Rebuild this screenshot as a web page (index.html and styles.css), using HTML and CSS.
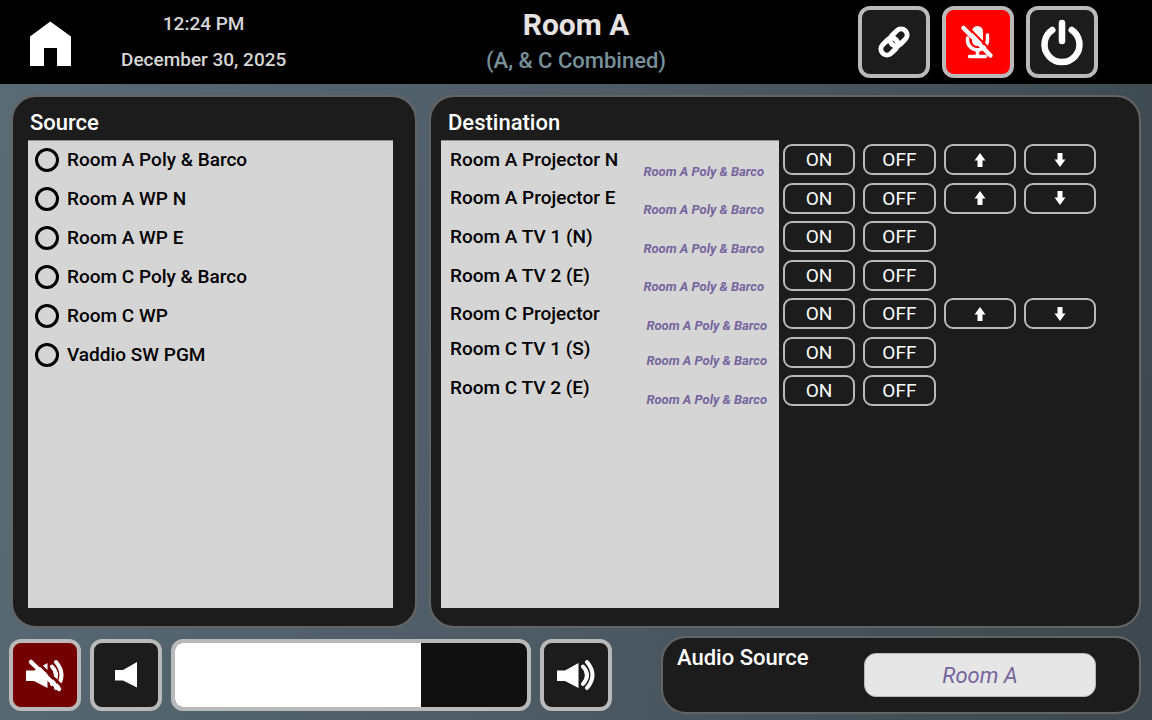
FILE: index.html
```html
<!DOCTYPE html>
<html lang="en">
<head>
    <meta charset="UTF-8">
    <meta name="viewport" content="width=device-width, initial-scale=1.0">
    <title>Room A</title>

    <link rel="stylesheet" href="styles.css">
</head>
<body>

    <!-- shared button icons -->
    <svg class="sprite" aria-hidden="true">
        <symbol id="up" viewBox="0 0 12 16">
            <path d="M6 1L11.500 8.500H8.500V15H3.500V8.500H.5z"/>
        </symbol>
        <symbol id="down" viewBox="0 0 12 16">
            <path d="M6 15L11.500 7.500H8.500V1H3.500V7.500H.5z"/>
        </symbol>
    </svg>

    <header class="topbar">
        <div class="topbar-left">
            <button class="home" aria-label="Home">
                <svg width="48" height="48" viewBox="0 0 48 48"><path d="M24.300 3.500L45 18.500V48H31V30H18V48H4V18.500z" fill="#fff"/></svg>
            </button>
            <div class="clock">
                <div>12:24 PM</div>
                <div>December 30, 2025</div>
            </div>
        </div>
        <div class="title">
            <h1>Room A</h1>
            <p>(A, &amp; C Combined)</p>
        </div>
        <div class="topbar-right">
            <button class="square" aria-label="Combine rooms">
                <svg width="40" height="40" viewBox="0 0 40 40" fill="none" stroke="#fff" stroke-width="5">
                    <g transform="rotate(-45 20 20)">
                        <rect x="4" y="14" width="19" height="12" rx="6"/>
                        <rect x="17" y="14" width="19" height="12" rx="6"/>
                    </g>
                </svg>
            </button>
            <button class="square mic" aria-label="Mute microphone">
                <svg width="36" height="36" viewBox="0 0 36 36" fill="none" stroke="#fff" stroke-linecap="round">
                    <rect x="12" y="2" width="11" height="20" rx="5.500" fill="#fff" stroke="none"/>
                    <path d="M7.500 14v2a10 10 0 0 0 20 0V11" stroke-width="3.500"/>
                    <path d="M17.500 26v6M9.500 32.500h16" stroke-width="3.500"/>
                    <path d="M6.500 1.500L34 29.500" stroke="#f00" stroke-width="2"/>
                    <path d="M3.500 4L30.500 31.500" stroke-width="4.500"/>
                </svg>
            </button>
            <button class="square" aria-label="Power">
                <svg width="48" height="48" viewBox="0 0 48 48" fill="none" stroke="#fff" stroke-width="6.500" stroke-linecap="round">
                    <path d="M14.300 12A17.500 17.500 0 1 0 33.700 12"/>
                    <path d="M24 5v18"/>
                </svg>
            </button>
        </div>
    </header>

    <main class="panels">
        <section class="panel source">
            <h2>Source</h2>
            <div class="list source-list">
                <label><input type="radio" name="source">Room A Poly &amp; Barco</label>
                <label><input type="radio" name="source">Room A WP N</label>
                <label><input type="radio" name="source">Room A WP E</label>
                <label><input type="radio" name="source">Room C Poly &amp; Barco</label>
                <label><input type="radio" name="source">Room C WP</label>
                <label><input type="radio" name="source">Vaddio SW PGM</label>
            </div>
        </section>

        <section class="panel destination">
            <h2>Destination</h2>
            <div class="destination-body">
                <div class="list destination-list">
                    <ul class="main-group">
                        <li>Room A Projector N <em>Room A Poly &amp; Barco</em></li>
                        <li>Room A Projector E <em>Room A Poly &amp; Barco</em></li>
                        <li>Room A TV 1 (N) <em>Room A Poly &amp; Barco</em></li>
                        <li>Room A TV 2 (E) <em>Room A Poly &amp; Barco</em></li>
                        <li class="room-c">Room C Projector <em>Room A Poly &amp; Barco</em></li>
                    </ul>
                    <ul class="tv-group">
                        <li class="room-c">Room C TV 1 (S) <em>Room A Poly &amp; Barco</em></li>
                        <li class="room-c">Room C TV 2 (E) <em>Room A Poly &amp; Barco</em></li>
                    </ul>
                </div>
                <div class="controls">
                    <div class="control-row">
                        <button>ON</button>
                        <button>OFF</button>
                        <button aria-label="Screen up"><svg><use href="#up"/></svg></button>
                        <button aria-label="Screen down"><svg><use href="#down"/></svg></button>
                    </div>
                    <div class="control-row">
                        <button>ON</button>
                        <button>OFF</button>
                        <button aria-label="Screen up"><svg><use href="#up"/></svg></button>
                        <button aria-label="Screen down"><svg><use href="#down"/></svg></button>
                    </div>
                    <div class="control-row">
                        <button>ON</button>
                        <button>OFF</button>
                    </div>
                    <div class="control-row">
                        <button>ON</button>
                        <button>OFF</button>
                    </div>
                    <div class="control-row">
                        <button>ON</button>
                        <button>OFF</button>
                        <button aria-label="Screen up"><svg><use href="#up"/></svg></button>
                        <button aria-label="Screen down"><svg><use href="#down"/></svg></button>
                    </div>
                    <div class="control-row">
                        <button>ON</button>
                        <button>OFF</button>
                    </div>
                    <div class="control-row">
                        <button>ON</button>
                        <button>OFF</button>
                    </div>
                </div>
            </div>
        </section>
    </main>

    <footer class="bottombar">
        <div class="volume">
            <button class="square mute" aria-label="Mute">
                <svg width="44" height="36" viewBox="0 0 44 36" fill="none" stroke-linecap="round">
                    <path d="M3 13.500H11L24.500 6V31L11 24H3z" fill="#fff"/>
                    <path d="M29 9.500Q37 18 29 27M33 5Q44 18 33 31" stroke="#fff" stroke-width="4"/>
                    <path d="M11 2L39 29" stroke="#740000" stroke-width="3"/>
                    <path d="M8 5L36 32" stroke="#fff" stroke-width="4.500"/>
                </svg>
            </button>
            <button class="square" aria-label="Volume down">
                <svg width="44" height="36" viewBox="0 0 44 36"><path d="M11 13H19L33 5V30.500L19 23.500H11z" fill="#fff"/></svg>
            </button>
            <input class="level" type="range" min="0" max="100" value="70" aria-label="Volume">
            <button class="square" aria-label="Volume up">
                <svg width="44" height="36" viewBox="0 0 44 36" fill="none" stroke-linecap="round">
                    <path d="M3 13.500H11L24.500 6V31L11 24H3z" fill="#fff"/>
                    <path d="M29 9.500Q37 18 29 27M33 5Q44 18 33 31" stroke="#fff" stroke-width="4"/>
                </svg>
            </button>
        </div>
        <section class="panel audio">
            <h2>Audio Source</h2>
            <button class="audio-room">Room A</button>
        </section>
    </footer>

</body>
</html>
```
FILE: styles.css
```css
*{
    box-sizing: border-box;
}

body{
    margin: 0;
    min-height: 100vh;
    display: flex;
    flex-direction: column;
    font-family: Roboto, "Liberation Sans", sans-serif;
    font-weight: 500;
    color: white;
    background: linear-gradient(100deg, #596b75, #4d5b65 50%, #3c474e);
}

h1, h2, p, ul{
    margin: 0;
    padding: 0;
}

button{
    font-family: inherit;
    color: white;
    padding: 0;
    cursor: pointer;
}

.sprite{
    display: none;
}

/* top bar */
.topbar{
    height: 84px;
    display: grid;
    grid-template-columns: 1fr auto 1fr;
    align-items: center;
    background: black;
}

.topbar-left{
    display: flex;
    align-items: center;
    gap: 47px;
    padding-left: 26px;
}

.home{
    border: none;
    background: none;
    height: 48px;
}

.clock{
    font-size: 19px;
    line-height: 36px;
    text-align: center;
    color: #d6d6d6;
}

.title{
    padding-top: 2px;
    text-align: center;
}

.title h1{
    font-size: 30px;
    line-height: 36px;
    color: #e6e2e2;
}

.title p{
    font-size: 22px;
    line-height: 36px;
    color: #78909a;
}

.topbar-right{
    display: flex;
    justify-content: flex-end;
    gap: 12px;
    padding-right: 54px;
}

.square{
    width: 72px;
    height: 72px;
    flex: none;
    display: flex;
    justify-content: center;
    align-items: center;
    border: 4px solid #b9b9b9;
    border-radius: 12px;
    background: #1c1c1c;
}

.mic{
    background: #f00;
}

.mute{
    background: #740000;
}

/* panels */
.panels{
    flex: 1;
    display: grid;
    grid-template-columns: 406fr 712fr;
    gap: 12px;
    padding: 11px 11px 8px;
}

.panel{
    border: 2px solid #646464;
    border-radius: 25px;
    background: #1c1c1c;
}

.panel h2{
    font-size: 22px;
    line-height: 26px;
    font-weight: 500;
}

.source, .destination{
    display: flex;
    flex-direction: column;
    padding: 13px 22px 18px 15px;
}

.source h2{
    padding: 0 2px 4px;
}

.destination{
    padding-left: 10px;
}

.destination h2{
    padding: 0 7px 4px;
}

.list{
    background: #d5d5d5;
    box-shadow: inset 0 1px #8f8f8f;
    color: black;
    font-size: 19px;
}

.source-list{
    flex: 1;
    display: grid;
    grid-template-rows: repeat(12, 1fr);
}

.source-list label{
    display: flex;
    align-items: center;
    gap: 8px;
    padding-left: 7px;
}

.source-list input{
    appearance: none;
    width: 24px;
    height: 24px;
    margin: 0;
    border: 3px solid black;
    border-radius: 50%;
}

.source-list input:checked{
    background: black;
    box-shadow: inset 0 0 0 3px #d5d5d5;
}

.destination-body{
    flex: 1;
    display: flex;
    gap: 4px;
}

.destination-list{
    flex: 1;
}

.destination-list ul{
    display: grid;
    grid-auto-rows: 1fr;
    list-style: none;
}

.main-group{
    height: 193px;
}

.tv-group{
    height: 78px;
    margin-top: -4px;
}

.destination-list li{
    display: flex;
    align-items: center;
    justify-content: space-between;
    padding: 0 15px 0 9px;
}

.destination-list .room-c{
    padding-right: 12px;
}

.destination-list em{
    align-self: flex-end;
    font-size: 13px;
    line-height: 15px;
    font-weight: 700;
    color: #77649f;
}

.controls{
    width: 334px;
    height: 262px;
    margin-top: 4px;
    padding-right: 21px;
    display: flex;
    flex-direction: column;
    justify-content: space-between;
}

.control-row{
    display: grid;
    grid-template-columns: repeat(4, 1fr);
    gap: 8px;
}

.control-row button{
    height: 31px;
    display: flex;
    justify-content: center;
    align-items: center;
    border: 2px solid #b9b9b9;
    border-radius: 9px;
    background: #1c1c1c;
    font-size: 19px;
}

.control-row svg{
    width: 12px;
    height: 16px;
    fill: white;
}

/* bottom bar */
.bottombar{
    display: grid;
    grid-template-columns: 603fr 480fr;
    gap: 49px;
    padding: 0 11px 6px 9px;
}

.volume{
    display: flex;
    align-items: center;
    gap: 9px;
}

.level{
    appearance: none;
    flex: 1;
    min-width: 0;
    height: 72px;
    margin: 0;
    border: 4px solid #b9b9b9;
    border-radius: 12px;
    background: linear-gradient(to right, white 70%, #101010 70%) padding-box;
}

.level::-webkit-slider-thumb{
    appearance: none;
    width: 1px;
    height: 64px;
}

.audio{
    height: 78px;
    display: flex;
    justify-content: space-between;
    padding: 7px 43px 0 14px;
}

.audio-room{
    width: 232px;
    height: 44px;
    margin-top: 8px;
    border: 1px solid #b9b9b9;
    border-radius: 12px;
    background: #e6e6e6;
    color: #77649f;
    font-size: 22px;
    font-style: italic;
    font-weight: 400;
}
```
